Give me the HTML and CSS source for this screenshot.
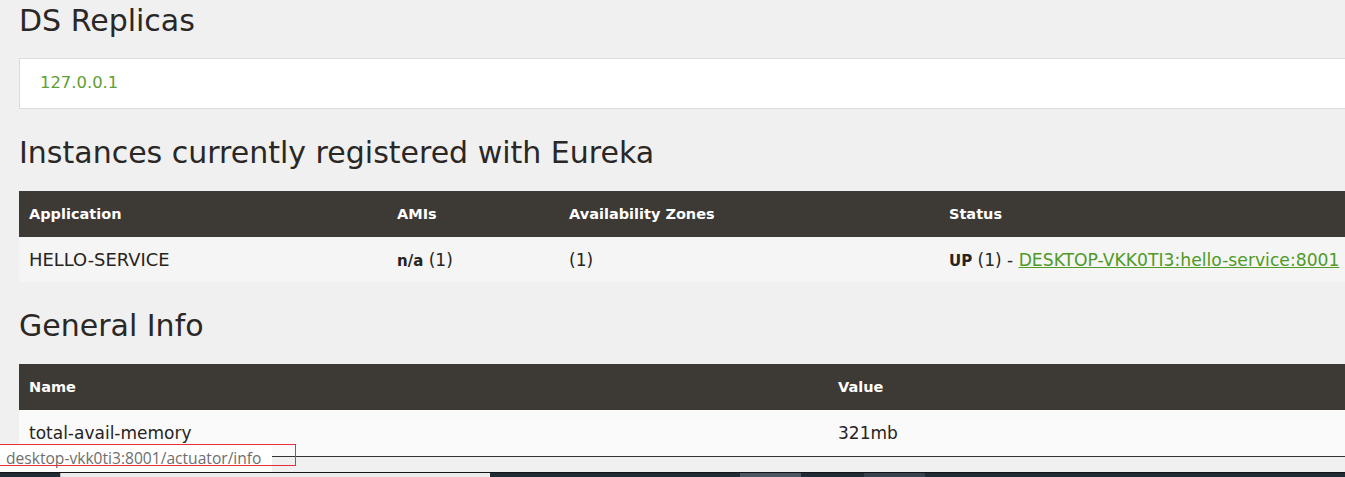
FILE: index.html
```html
<!DOCTYPE html>
<html lang="en">
<head>
<meta charset="utf-8">
<title>Eureka</title>
<link rel="stylesheet" href="styles.css">
</head>
<body>
<div class="viewport">
  <div class="page">
    <h1 class="section-title first">DS Replicas</h1>
    <div class="replicas">127.0.0.1</div>

    <h2 class="section-title">Instances currently registered with Eureka</h2>
    <table class="grid instances">
      <colgroup>
        <col class="c-app"><col class="c-ami"><col class="c-zone"><col class="c-status">
      </colgroup>
      <thead>
        <tr><th>Application</th><th>AMIs</th><th>Availability Zones</th><th>Status</th></tr>
      </thead>
      <tbody>
        <tr>
          <td class="caps">HELLO-SERVICE</td>
          <td><b>n/a</b> (1)</td>
          <td>(1)</td>
          <td><b class="up">UP</b> (1) - <a href="#">DESKTOP-VKK0TI3:hello-service:8001</a></td>
        </tr>
      </tbody>
    </table>

    <h2 class="section-title">General Info</h2>
    <table class="grid info">
      <colgroup>
        <col class="c-name"><col class="c-value">
      </colgroup>
      <thead>
        <tr><th>Name</th><th>Value</th></tr>
      </thead>
      <tbody>
        <tr><td>total-avail-memory</td><td>321mb</td></tr>
      </tbody>
    </table>
  </div>

  <div class="status-bubble">desktop-vkk0ti3:8001/actuator/info</div>
  <div class="annotation"></div>
</div>
<div class="window-edge"></div>
<div class="taskbar">
  <span class="tb dark w60"></span>
  <span class="tb window"></span>
  <span class="tb dark w250"></span>
  <span class="tb active"></span>
  <span class="tb dark w63"></span>
  <span class="tb semi"></span>
  <span class="tb dark fill"></span>
</div>
</body>
</html>
```

FILE: styles.css
```css
html, body {
  margin: 0;
  padding: 0;
}
body {
  width: 1345px;
  height: 477px;
  overflow: hidden;
  display: flex;
  flex-direction: column;
  background: #f0f0f0;
  font-family: "DejaVu Sans", sans-serif;
  color: #2b2b2b;
}

.viewport {
  flex: 1;
  position: relative;
  overflow: hidden;
}

.page {
  width: 1500px;
  padding: 3px 0 0 19px;
}

.section-title {
  margin: 26px 0 20px;
  font-size: 30px;
  line-height: 36px;
  font-weight: normal;
  color: #2a2725;
}
.section-title.first {
  margin: 0 0 19px;
}

.replicas {
  background: #fff;
  border: 1px solid #dcdcdc;
  padding: 14px 20px 15px;
  font-size: 16.4px;
  line-height: 20px;
  color: #5f9e33;
}

.grid {
  width: 1500px;
  border-collapse: collapse;
  table-layout: fixed;
}
.c-app { width: 368px; }
.c-ami { width: 172px; }
.c-zone { width: 380px; }
.c-name { width: 809px; }

.grid th {
  height: 46px;
  padding: 0 10px;
  background: #3d3935;
  color: #fff;
  text-align: left;
  font-size: 14.5px;
  font-weight: bold;
  vertical-align: middle;
}
.grid td {
  height: 45px;
  padding: 0 10px;
  font-size: 17px;
  vertical-align: middle;
  white-space: nowrap;
  color: #262321;
}
.instances td { background: #f5f5f5; }
.info td {
  height: 46px;
  background: #fafafa;
}
.info tbody tr { border-bottom: 1px solid #34312e; }

.grid td.caps { font-size: 17.9px; }
.grid td b { font-weight: bold; font-size: 15px; }
.grid a {
  color: #4f9a26;
  text-decoration: underline;
  font-size: 17.2px;
}

.status-bubble {
  position: absolute;
  left: 0;
  bottom: 0;
  width: 266px;
  height: 27px;
  padding-left: 6px;
  background: #fff;
  font-family: "Open Sans", sans-serif;
  font-size: 15.6px;
  line-height: 27px;
  color: #6e6e6e;
  white-space: nowrap;
}

.annotation {
  position: absolute;
  left: -1px;
  top: 444px;
  width: 297px;
  height: 22px;
  box-sizing: border-box;
  border: 1px solid #e8303a;
}

.window-edge {
  height: 1px;
  background: #141414;
}

.taskbar {
  height: 4px;
  display: flex;
}
.tb { display: block; height: 100%; }
.tb.dark { background: #1f2c35; }
.w60 { width: 60px; }
.w250 { width: 250px; }
.w63 { width: 63px; }
.tb.window {
  width: 429px;
  background: #ececec;
  border-left: 1px solid #b8b8b8;
}
.tb.active { width: 61px; background: #4b5763; }
.tb.semi { width: 61px; background: #37434e; }
.tb.fill { flex: 1; }
```
